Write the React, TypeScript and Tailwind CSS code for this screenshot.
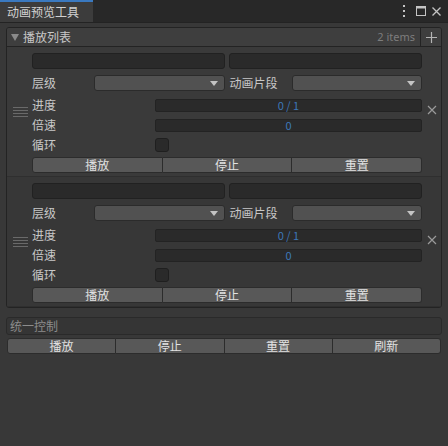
import React from 'react';

const font = { fontFamily: '"Noto Sans CJK SC", "Noto Sans", sans-serif' };

const Dropdown: React.FC = () => (
  <div className="flex-1 h-4 rounded-[3px] bg-[#515151] border border-[#2b2b2b] flex items-center justify-end pr-[6px]">
    <svg width="8" height="5" viewBox="0 0 8 5">
      <path d="M0 0 L8 0 L4 5 Z" fill="#c4c4c4" />
    </svg>
  </div>
);

const Bar: React.FC<{ text: string }> = ({ text }) => (
  <div className="flex-1 h-[13px] bg-[#2a2a2a] border border-[#232323] rounded-[2px] flex items-center justify-center text-[11px] leading-none text-[#3d78b8]">
    {text}
  </div>
);

const ButtonRow: React.FC<{ labels: string[] }> = ({ labels }) => (
  <div className="flex h-4">
    {labels.map((l, i) => (
      <button
        key={l}
        className={`flex-1 h-4 bg-[#585858] border border-[#2c2c2c] text-[12px] leading-none text-[#e2e2e2] flex items-center justify-center ${
          i === 0 ? 'rounded-l-[3px]' : 'border-l-0'
        } ${i === labels.length - 1 ? 'rounded-r-[3px]' : ''}`}
      >
        {l}
      </button>
    ))}
  </div>
);

const Item: React.FC<{ light?: boolean }> = ({ light }) => (
  <div className={`flex h-[130px] border-b border-[#2f2f2f] ${light ? 'bg-[#3a3a3a]' : 'bg-[#373737]'}`}>
    {/* drag handle */}
    <div className="w-[25px] flex items-center justify-center pl-[2px]">
      <div className="flex flex-col gap-[2px]">
        <div className="w-[15px] h-px bg-[#6a6a6a]" />
        <div className="w-[15px] h-px bg-[#6a6a6a]" />
        <div className="w-[15px] h-px bg-[#6a6a6a]" />
        <div className="w-[15px] h-px bg-[#6a6a6a]" />
      </div>
    </div>

    <div className="w-[390px] pt-[5px] flex flex-col text-[12px] text-[#c8c8c8]">
      <div className="h-[18px] flex items-center gap-1">
        <div className="flex-1 h-4 rounded-[3px] bg-[#2a2a2a] border border-[#212121]" />
        <div className="flex-1 h-4 rounded-[3px] bg-[#2a2a2a] border border-[#212121]" />
      </div>
      <div className="h-[18px] mt-1 flex items-center gap-1">
        <div className="flex-1 flex items-center">
          <span className="w-[62px]">层级</span>
          <Dropdown />
        </div>
        <div className="flex-1 flex items-center pl-[1px]">
          <span className="w-[62px]">动画片段</span>
          <Dropdown />
        </div>
      </div>
      <div className="h-[18px] mt-1 flex items-center">
        <span className="w-[123px]">进度</span>
        <Bar text="0 / 1" />
      </div>
      <div className="h-[18px] mt-[2px] flex items-center">
        <span className="w-[123px]">倍速</span>
        <Bar text="0" />
      </div>
      <div className="h-[18px] mt-[2px] flex items-center">
        <span className="w-[123px]">循环</span>
        <div className="w-[14px] h-[14px] rounded-[3px] bg-[#2a2a2a] border border-[#1f1f1f]" />
      </div>
      <div className="h-[18px] mt-[2px] flex flex-col justify-center">
        <ButtonRow labels={['播放', '停止', '重置']} />
      </div>
    </div>

    <div className="flex-1 flex items-center justify-center pb-[4px]">
      <svg width="10" height="10" viewBox="0 0 10 10">
        <path d="M1 1 L9 9 M9 1 L1 9" stroke="#9a9a9a" strokeWidth="1.2" />
      </svg>
    </div>
  </div>
);

export default function App() {
  return (
    <div className="w-[448px] h-[446px] bg-[#383838] flex flex-col" style={font}>
      {/* Tab bar */}
      <div className="h-[23px] bg-[#282828] border-b border-[#232323] flex items-end">
        <div className="w-[93px] h-[22px] bg-[#3c3c3c] border-t-2 border-[#3a79c0] text-[12px] leading-none text-[#d2d2d2] flex items-center pl-[7px]">
          动画预览工具
        </div>
        <div className="flex-1 h-full flex items-center justify-end gap-[6px] pr-[7px]">
          <svg width="4" height="12" viewBox="0 0 4 12">
            <rect x="1" y="0" width="2" height="2" fill="#c4c4c4" />
            <rect x="1" y="5" width="2" height="2" fill="#c4c4c4" />
            <rect x="1" y="10" width="2" height="2" fill="#c4c4c4" />
          </svg>
          <svg width="10" height="10" viewBox="0 0 10 10" className="ml-[4px]">
            <rect x="0.5" y="0.5" width="9" height="9" fill="none" stroke="#c4c4c4" />
            <rect x="0.5" y="0.5" width="9" height="2" fill="#c4c4c4" />
          </svg>
          <svg width="9" height="9" viewBox="0 0 9 9">
            <path d="M0.5 0.5 L8.5 8.5 M8.5 0.5 L0.5 8.5" stroke="#c4c4c4" strokeWidth="1.3" />
          </svg>
        </div>
      </div>

      {/* Playlist panel */}
      <div className="mx-[6px] mt-1 border border-[#232323] rounded-[3px] overflow-hidden">
        <div className="h-[19px] bg-[#3e3e3e] border-b border-[#232323] flex items-center">
          <div className="flex-1 flex items-center pl-[4px] gap-[4px] text-[12px] text-[#c8c8c8]">
            <svg width="8" height="7" viewBox="0 0 8 7">
              <path d="M0 0 L8 0 L4 7 Z" fill="#8a8a8a" />
            </svg>
            <span>播放列表</span>
          </div>
          <span className="text-[11px] text-[#7d7d7d] pr-[5px]" style={{ fontFamily: '"Noto Sans", sans-serif' }}>
            2 items
          </span>
          <div className="w-[21px] h-full border-l border-[#232323] flex items-center justify-center">
            <svg width="11" height="11" viewBox="0 0 11 11">
              <path d="M5.5 0 V11 M0 5.5 H11" stroke="#b4b4b4" strokeWidth="1.2" />
            </svg>
          </div>
        </div>
        <Item light />
        <Item />
      </div>

      {/* Unified control */}
      <div className="mx-[6px] mt-[9px] h-[18px] rounded-[3px] bg-[#353535] border border-[#2a2a2a] flex items-center pl-[3px] text-[12px] text-[#8c8c8c]">
        统一控制
      </div>
      <div className="mx-[7px] mt-[3px]">
        <ButtonRow labels={['播放', '停止', '重置', '刷新']} />
      </div>
    </div>
  );
}
